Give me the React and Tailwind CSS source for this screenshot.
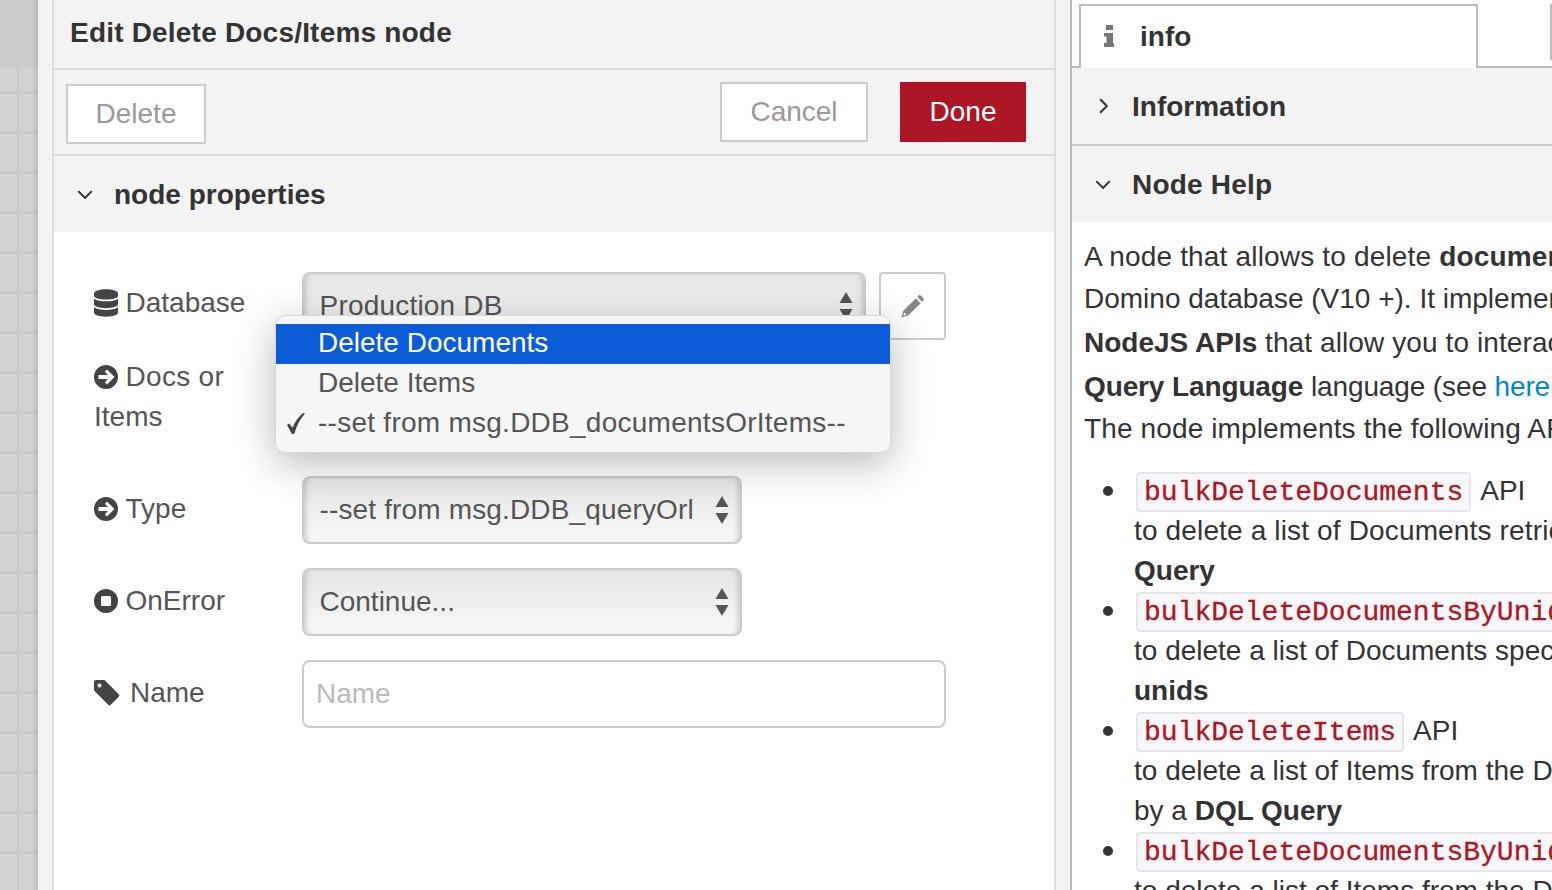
import React from 'react';
import { FaDatabase } from 'react-icons/fa';

function Chevron({ dir = 'down', className = '' }) {
  const d = dir === 'down' ? 'M1 1 L7 7 L13 1' : 'M1 1 L7 7 L1 13';
  return (
    <svg viewBox={dir === 'down' ? '0 0 14 8' : '0 0 8 14'} className={className} fill="none" stroke="#333" strokeWidth="1.8">
      <path d={d} />
    </svg>
  );
}

function StopCircle() {
  return (
    <svg viewBox="0 0 24 24" className="w-6 h-6 shrink-0" fill="#444">
      <path fillRule="evenodd" d="M12 0a12 12 0 1 0 0 24a12 12 0 0 0 0-24zM8.5 7h7a1.5 1.5 0 0 1 1.500 1.500v7a1.500 1.500 0 0 1-1.500 1.500h-7a1.500 1.500 0 0 1-1.500-1.500v-7a1.500 1.500 0 0 1 1.500-1.500z" />
    </svg>
  );
}

function ArrowCircle() {
  return (
    <svg viewBox="0 0 24 24" className="w-6 h-6 shrink-0" fill="#444">
      <path fillRule="evenodd" d="M12 0a12 12 0 1 0 0 24a12 12 0 0 0 0-24zM20.500 12L13 19.500L10.800 17.300L14 14H4.500V10H14L10.800 6.700L13 4.500z" />
    </svg>
  );
}

function TagIcon() {
  return (
    <svg viewBox="0 0 26 26" className="w-[26px] h-[26px] shrink-0" fill="#444">
      <path fillRule="evenodd" d="M2 0H10.500L25 14.500Q26 15.500 25 16.500L16.500 25Q15.500 26 14.500 25L1 11.500Q0 10.500 0 9.500V2Q0 0 2 0zM5.500 3.500a2 2 0 1 0 0 4a2 2 0 0 0 0-4z" />
    </svg>
  );
}

function PencilIcon() {
  return (
    <svg viewBox="0 0 24 24" className="w-[23px] h-[23px]" fill="#888">
      <path fillRule="evenodd" d="M0.500 23.500L2.500 16.500L15.500 3.500L20.500 8.500L7.500 21.500zM3.500 18L2.500 21.500L6 20.500z" />
      <path d="M17 2L18.500 0.500Q19.500 -0.300 20.500 0.500L23.500 3.500Q24.300 4.500 23.500 5.500L22 7z" />
    </svg>
  );
}

function InfoIcon() {
  return (
    <svg viewBox="0 0 10 22" className="w-[10px] h-[22px]" fill="#777">
      <path d="M2 0H9V5H2zM0 8H9V18H10V22H0V18H2.500V11.500H0z" />
    </svg>
  );
}

function CheckMark() {
  return (
    <svg viewBox="0 0 18 21" className="w-[18px] h-[21px]" fill="#444">
      <path d="M0 12L2.200 10.500L5.500 14.800C8 9 11 4 16 0L18 0.500C13 6 9.500 13 7.200 21H5z" />
    </svg>
  );
}

function Arrows({ className = '' }) {
  return (
    <svg viewBox="0 0 14 28" className={className} fill="#555">
      <path d="M7 0 L13.500 11 H0.500 Z" />
      <path d="M7 28 L13.500 17 H0.500 Z" />
    </svg>
  );
}

function FakeSelect({ text, width, track = '' }) {
  return (
    <div className={`${width} h-[68px] shrink-0 relative rounded-lg border-2 border-[#ccc] bg-gradient-to-b from-[#e6e6e6] to-[#f8f8f8] shadow-[inset_6px_0_6px_-5px_rgba(0,0,0,0.22),inset_-6px_0_6px_-5px_rgba(0,0,0,0.22)] pl-[15.5px] leading-[64px] text-[#555] ${track}`}>
      {text}
      <Arrows className="absolute right-[11px] top-[18px] w-[14px] h-[28px]" />
    </div>
  );
}

function Row({ label, icon, height, labelPad, children, gap = 'gap-[7.5px]' }) {
  return (
    <div className={`flex ${height}`}>
      <div className={`w-[208px] shrink-0 ${labelPad} text-[#555]`}>
        <div className={`flex items-center ${gap} h-10`}>
          {icon}
          <span>{label}</span>
        </div>
      </div>
      {children}
    </div>
  );
}

function Code({ children }) {
  return (
    <code className="inline-block h-10 mt-[2px] mx-[2px] px-[6px] rounded border-2 border-[#e6e6ec] bg-[#f7f7f9] text-[#ad1625] font-['Liberation_Mono',monospace] text-[28px] leading-[38px] [-webkit-text-stroke:0.3px_#ad1625] whitespace-nowrap">
      {children}
    </code>
  );
}

function Bullet({ children }) {
  return (
    <div className="flex h-10 items-center relative pl-[50px]">
      <span className="absolute left-[19px] top-[15px] w-[10px] h-[10px] rounded-full bg-[#333]"></span>
      {children}
    </div>
  );
}

function Line({ children, track = '' }) {
  return <div className={`h-10 pl-[50px] leading-10 ${track}`}>{children}</div>;
}

function Canvas() {
  return (
    <div className="w-[38px] shrink-0 relative bg-[#d2d2d2] bg-[linear-gradient(#c9c9c9_3px,transparent_3px),linear-gradient(90deg,#c9c9c9_2px,transparent_2px)] bg-[size:40px_40px] bg-[position:-23px_11px]">
      <div className="h-[68px] bg-[#cbcbcb]"></div>
      <div className="absolute inset-y-0 right-0 w-[6px] bg-gradient-to-r from-transparent to-black/10"></div>
    </div>
  );
}

export default function App() {
  return (
    <div className="w-[1552px] h-[890px] flex overflow-hidden bg-[#f3f3f3] font-['Liberation_Sans',Arial,sans-serif] text-[28px] leading-10 text-[#333]">
      <Canvas />
      <div className="w-[14px] shrink-0"></div>

      {/* edit dialog */}
      <div className="w-[1004px] shrink-0 border-x-2 border-[#ddd] flex flex-col">
        <div className="h-[70px] shrink-0 border-b-2 border-[#ddd] pl-4 pt-[13px] font-bold tracking-[0.2px]">Edit Delete Docs/Items node</div>
        <div className="h-[86px] shrink-0 border-b-2 border-[#ddd] flex pl-3 pr-7">
          <button className="w-[140px] h-[60px] mt-[14px] bg-white border-2 border-[#ccc] text-[#999]">Delete</button>
          <button className="ml-auto w-[148px] h-[60px] mt-3 bg-white border-2 border-[#ccc] text-[#999]">Cancel</button>
          <button className="ml-8 w-[126px] h-[60px] mt-3 bg-[#ad1625] text-white">Done</button>
        </div>
        <div className="h-[76px] shrink-0 flex items-center font-bold">
          <Chevron className="w-[16px] h-[9px] ml-[23px] mr-[21px]" />
          <span className="pt-[2px]">node properties</span>
        </div>
        <div className="flex-1 bg-white relative pt-10 pl-10 text-[#555]">
          <Row label="Database" height="h-[72px]" labelPad="pt-[11px]" icon={<FaDatabase className="w-6 h-7 shrink-0 text-[#444]" />}>
            <FakeSelect text="Production DB" width="w-[564px]" track="tracking-[0.2px]" />
            <button className="ml-[13px] w-[67px] h-[68px] flex items-center justify-center border-2 border-[#ccc] rounded bg-white">
              <PencilIcon />
            </button>
          </Row>
          <div className="flex h-[132px]">
            <div className="w-[208px] shrink-0 pt-[13px] text-[#555]">
              <div className="flex items-center gap-[7.5px] h-10">
                <ArrowCircle />
                <span className="tracking-[0.3px]">Docs or</span>
              </div>
              <div>Items</div>
            </div>
          </div>
          <Row label="Type" height="h-[92px]" labelPad="pt-[13px]" icon={<ArrowCircle />}>
            <FakeSelect text="--set from msg.DDB_queryOrl" width="w-[440px]" track="tracking-[0.15px]" />
          </Row>
          <Row label="OnError" height="h-[92px]" labelPad="pt-[13px]" icon={<StopCircle />}>
            <FakeSelect text="Continue..." width="w-[440px]" />
          </Row>
          <Row label="Name" height="h-[92px]" labelPad="pt-[13px]" gap="gap-[10px]" icon={<TagIcon />}>
            <div className="w-[644px] h-[68px] rounded-lg border-2 border-[#ccc] bg-white pl-3 leading-[64px] text-[#bbb]">Name</div>
          </Row>

          {/* open select menu */}
          <div className="absolute left-[221px] top-[83px] w-[616px] h-[138px] py-2 rounded-[10px] bg-[#f6f6f6] border border-[#d8d8d8] shadow-[0_10px_40px_rgba(0,0,0,0.28)] text-[#555]">
            <div className="h-10 pl-[42px] leading-[38px] bg-[#0d5cd7] text-white">Delete Documents</div>
            <div className="h-10 pl-[42px] leading-[38px]">Delete Items</div>
            <div className="h-10 pl-[42px] leading-[38px] relative tracking-[0.26px]">
              <span className="absolute left-[11px] top-[9px]"><CheckMark /></span>
              --set from msg.DDB_documentsOrItems--
            </div>
          </div>
        </div>
      </div>

      <div className="w-[14px] shrink-0"></div>

      {/* sidebar */}
      <div className="flex-1 min-w-0 border-l-2 border-[#bbb] bg-white flex flex-col overflow-hidden">
        <div className="h-[68px] shrink-0 relative border-b-2 border-[#bbb] bg-white">
          <div className="absolute left-[7px] top-[4px] w-[399px] h-[64px] border-2 border-b-0 border-[#bbb] bg-white flex items-center font-bold">
            <span className="ml-[23px] -mt-[2px]"><InfoIcon /></span>
            <span className="ml-[26px]">info</span>
          </div>
          <div className="absolute left-[478px] top-[4px] w-2 h-[56px] border-l-2 border-[#bbb]"></div>
        </div>
        <div className="h-[78px] shrink-0 bg-[#f3f3f3] border-b-2 border-[#ccc] flex items-center font-bold">
          <Chevron dir="right" className="w-[9px] h-[16px] ml-[27px] mr-[24px]" />
          <span className="pt-[2px]">Information</span>
        </div>
        <div className="h-[76px] shrink-0 bg-[#f3f3f3] flex items-center font-bold">
          <Chevron className="w-[16px] h-[9px] ml-[23px] mr-[21px]" />
          <span className="pt-[2px] tracking-[0.2px]">Node Help</span>
        </div>
        <div className="pl-3 pt-[15px] whitespace-nowrap">
          <div className="h-[42px] tracking-[0.17px]">A node that allows to delete <b>documents</b> from a</div>
          <div className="h-[44px]">Domino database (V10 +). It implements the</div>
          <div className="h-[44px]"><b>NodeJS APIs</b> <span className="tracking-[0.1px]">that allow you to interact with</span></div>
          <div className="h-[42px] tracking-[-0.12px]"><b>Query Language</b> language (see <span className="text-[#0088cc]">here</span>.</div>
          <div className="h-10 tracking-[0.13px]">The node implements the following APIs:</div>
          <div className="mt-[22px]">
            <Bullet><Code>bulkDeleteDocuments</Code><span className="ml-[7px]">API</span></Bullet>
            <Line track="tracking-[0.15px]">to delete a list of Documents retrieved by a DQL</Line>
            <Line><b>Query</b></Line>
            <Bullet><Code>bulkDeleteDocumentsByUnid</Code><span className="ml-[7px]">API</span></Bullet>
            <Line>to delete a list of Documents specified by their</Line>
            <Line><b>unids</b></Line>
            <Bullet><Code>bulkDeleteItems</Code><span className="ml-[7px]">API</span></Bullet>
            <Line>to delete a list of Items from the Documents</Line>
            <Line>by a <b>DQL Query</b></Line>
            <Bullet><Code>bulkDeleteDocumentsByUnid</Code><span className="ml-[7px]">API</span></Bullet>
            <Line>to delete a list of Items from the Documents</Line>
          </div>
        </div>
      </div>
    </div>
  );
}
